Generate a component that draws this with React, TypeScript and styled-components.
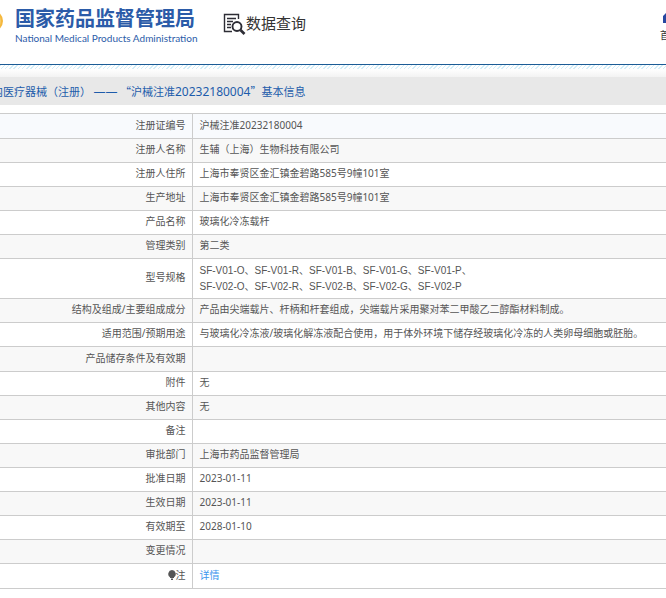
import React from "react";
import styled, { createGlobalStyle } from "styled-components";

const GlobalStyle = createGlobalStyle`
  * { box-sizing: border-box; }
  html { overflow: hidden; }
  body {
    margin: 0;
    background: #fff;
    color: #555;
    font: 10px/16px "Noto Sans", "Noto Sans CJK SC", sans-serif;
  }
`;

const Header = styled.header`
  display: flex;
  align-items: flex-start;
  height: 65px;
  overflow: hidden;
  border-bottom: 1px solid #1c5c96;
`;

const Emblem = styled.svg`
  flex: none;
  width: 22px;
  height: 22px;
  margin: 10px 12px 0 -19px;
`;

const Brand = styled.a`
  display: flex;
  color: #2b5ba8;
  text-decoration: none;
`;

const BrandText = styled.div`
  display: flex;
  flex-direction: column;
  width: 179px;
  padding-top: 6px;
  white-space: nowrap;
`;

const BrandName = styled.span`
  font: 700 20px/24px "Noto Sans CJK SC", sans-serif;
`;

const BrandSub = styled.span`
  font: 400 10px/16px Lato, sans-serif;
`;

const Query = styled.h1`
  display: flex;
  align-items: center;
  margin: 11px 0 0 29px;
  color: #333;
  font: 400 15px/24px "Noto Sans CJK SC", sans-serif;
  white-space: nowrap;
`;

const QueryIcon = styled.svg`
  width: 23px;
  height: 24px;
`;

const HomeLink = styled.a`
  display: flex;
  flex: none;
  flex-direction: column;
  align-items: center;
  gap: 3px;
  margin: 12px -14px 0 auto;
  color: #333;
  text-decoration: none;
`;

const HomeIcon = styled.svg`
  width: 14px;
  height: 12px;
`;

const Hatch = styled.div`
  height: 4px;
  background: repeating-linear-gradient(135deg, #d3eef8 0 1px, #fff 1px 3px);
`;

const Shade = styled.div`
  height: 8px;
  background: linear-gradient(#fff, #f3f3f3);
`;

const TitleBar = styled.div`
  height: 28px;
  overflow: hidden;
  background: #e8e8e8;
`;

const Title = styled.h2`
  margin: 0 0 0 -8px;
  color: #1d5cab;
  font: 400 11px/28px "Noto Sans CJK SC", sans-serif;
  white-space: pre;
`;

const TitleLatin = styled.span`
  font: 400 12px/28px "Noto Sans", sans-serif;
`;

const Table = styled.table`
  width: 100%;
  margin-top: 8px;
  border-collapse: collapse;
  border-bottom: 1px solid #ccc;
`;

const Row = styled.tr<{ $tall?: boolean }>`
  height: ${(p) => (p.$tall ? 25 : 24)}px;
  border-top: 1px solid #ccc;
  &:nth-child(even) { background: #f8f8f8; }
  &:first-child { background: #f8fafd; }
`;

const Label = styled.th`
  width: 192px;
  padding: 2px 6px 5px 0;
  border-right: 1px solid #ccc;
  font-weight: 400;
  text-align: right;
  white-space: nowrap;
`;

const Value = styled.td<{ $code?: boolean }>`
  padding: ${(p) => (p.$code ? "4px 7px 3px" : "2px 7px 5px")};
  font-family: ${(p) => (p.$code ? '"Liberation Sans"' : '"Noto Sans"')}, "Noto Sans CJK SC", sans-serif;
  white-space: pre-line;
`;

const Bulb = styled.svg`
  width: 8px;
  height: 10px;
  vertical-align: -1px;
`;

const DetailLink = styled.a`
  color: #3c97ee;
  text-decoration: none;
`;

type RecordItem = { label: string; value: string; tall?: boolean; code?: boolean };

const records: RecordItem[] = [
  { label: "注册证编号", value: "沪械注准20232180004", tall: true },
  { label: "注册人名称", value: "生辅（上海）生物科技有限公司" },
  { label: "注册人住所", value: "上海市奉贤区金汇镇金碧路585号9幢101室" },
  { label: "生产地址", value: "上海市奉贤区金汇镇金碧路585号9幢101室" },
  { label: "产品名称", value: "玻璃化冷冻载杆" },
  { label: "管理类别", value: "第二类" },
  {
    label: "型号规格",
    value: "SF-V01-O、SF-V01-R、SF-V01-B、SF-V01-G、SF-V01-P、\nSF-V02-O、SF-V02-R、SF-V02-B、SF-V02-G、SF-V02-P",
    code: true,
  },
  { label: "结构及组成/主要组成成分", value: "产品由尖端载片、杆柄和杆套组成，尖端载片采用聚对苯二甲酸乙二醇酯材料制成。" },
  { label: "适用范围/预期用途", value: "与玻璃化冷冻液/玻璃化解冻液配合使用，用于体外环境下储存经玻璃化冷冻的人类卵母细胞或胚胎。" },
  { label: "产品储存条件及有效期", value: "", tall: true },
  { label: "附件", value: "无" },
  { label: "其他内容", value: "无" },
  { label: "备注", value: "" },
  { label: "审批部门", value: "上海市药品监督管理局" },
  { label: "批准日期", value: "2023-01-11" },
  { label: "生效日期", value: "2023-01-11" },
  { label: "有效期至", value: "2028-01-10" },
  { label: "变更情况", value: "" },
];

export default function App() {
  return (
    <>
      <GlobalStyle />
      <Header>
        <Brand href="#">
          <Emblem viewBox="0 0 22 22" aria-hidden="true">
            <circle cx="11" cy="11" r="11" fill="#f5b83d" />
            <circle cx="11" cy="11" r="8.500" fill="none" stroke="#f8cc6a" />
          </Emblem>
          <BrandText>
            <BrandName>国家药品监督管理局</BrandName>
            <BrandSub>National Medical Products Administration</BrandSub>
          </BrandText>
        </Brand>
        <Query>
          <QueryIcon viewBox="0 0 23 24" fill="none" stroke="#2d2d35" aria-hidden="true">
            <path d="M15.500 8V3.500H1.500V20.500H9" strokeWidth="1.400" />
            <path d="M4 7.500h9M4 10.500h6M4 13.500h4M4 16.500h4" strokeWidth="1.300" />
            <circle cx="14" cy="15.500" r="4.500" strokeWidth="1.900" />
            <path d="M17.500 19L21.500 23" strokeWidth="2.600" />
          </QueryIcon>
          数据查询
        </Query>
        <HomeLink href="#">
          <HomeIcon viewBox="0 0 14 12" fill="#2747a0" aria-hidden="true">
            <path d="M3 1h8l3 3v7H9V7H5v4H0V4z" />
          </HomeIcon>
          首页
        </HomeLink>
      </Header>
      <Hatch />
      <Shade />
      <TitleBar>
        <Title>
          内医疗器械（注册） <TitleLatin>——</TitleLatin> “沪械注准<TitleLatin>20232180004</TitleLatin>”基本信息
        </Title>
      </TitleBar>
      <Table>
        <tbody>
          {records.map(({ label, value, tall, code }) => (
            <Row key={label} $tall={tall}>
              <Label scope="row">{label}</Label>
              <Value $code={code}>{value}</Value>
            </Row>
          ))}
          <Row $tall>
            <Label scope="row">
              <Bulb viewBox="0 0 8 10" fill="#555" aria-hidden="true">
                <path d="M4 0a4 4 0 0 1 2 7.300V8H2V7.300A4 4 0 0 1 4 0zM3 8.500h2V10H3z" />
              </Bulb>
              注
            </Label>
            <Value><DetailLink href="#">详情</DetailLink></Value>
          </Row>
        </tbody>
      </Table>
    </>
  );
}
